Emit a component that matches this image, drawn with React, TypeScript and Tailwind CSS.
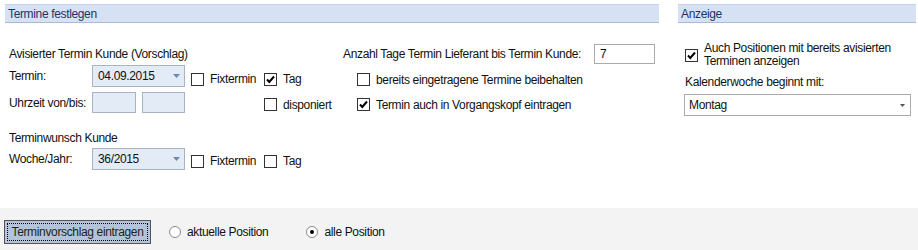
import React from "react";

const font = { fontFamily: '"Liberation Sans", Arial, sans-serif' };

function Check({ checked = false }: { checked?: boolean }) {
  return (
    <span className="w-[13px] h-[13px] shrink-0 border border-[#333333] bg-white flex items-center justify-center">
      {checked && (
        <svg width="11" height="11" viewBox="0 0 11 11">
          <path d="M2 5.5 L4.3 8 L9 2.5" stroke="#000" strokeWidth="2" fill="none" />
        </svg>
      )}
    </span>
  );
}

function Radio({ checked = false }: { checked?: boolean }) {
  return (
    <span className="w-[12px] h-[12px] shrink-0 rounded-full border border-[#8a8a8a] bg-white flex items-center justify-center">
      {checked && <span className="w-[4px] h-[4px] rounded-full bg-black" />}
    </span>
  );
}

function Combo({ value, w }: { value: string; w: string }) {
  return (
    <div className={`${w} h-[22px] border border-[#a9b4c3] bg-[#e3ebf7] flex items-center justify-between pl-[5px] pr-[4px]`}>
      <span>{value}</span>
      <svg width="7" height="4" viewBox="0 0 7 4">
        <path d="M0 0 H7 L3.5 4 Z" fill="#6a8ab5" />
      </svg>
    </div>
  );
}

function Header({ title }: { title: string }) {
  return (
    <div className="h-[19px] bg-[#d6e1f3] border-t border-b border-t-[#c4d2e6] border-b-[#a9bcd6] flex items-center pl-[3px] text-[#1e3466]">
      {title}
    </div>
  );
}

export default function App() {
  return (
    <div
      className="w-[918px] h-[250px] bg-white text-[12px] tracking-[-0.35px] text-[#111] flex flex-col overflow-hidden"
      style={font}
    >
      <div className="h-[208px] flex pt-[4px]">
        {/* left panel */}
        <div className="ml-[5px] w-[654px] flex flex-col">
          <Header title="Termine festlegen" />
          <div className="flex">
            {/* column A */}
            <div className="w-[338px] pl-[4px] flex flex-col">
              <div className="mt-[24px] h-[14px] leading-[14px]">Avisierter Termin Kunde (Vorschlag)</div>
              <div className="mt-[4px] h-[22px] flex items-center">
                <span className="w-[83px]">Termin:</span>
                <Combo value="04.09.2015" w="w-[93px]" />
                <div className="ml-[6px] mt-[6px] flex items-center">
                  <Check />
                  <span className="ml-[6px] w-[54px]">Fixtermin</span>
                  <Check checked />
                  <span className="ml-[6px]">Tag</span>
                </div>
              </div>
              <div className="mt-[5px] h-[21px] flex items-center">
                <span className="w-[83px]">Uhrzeit von/bis:</span>
                <div className="w-[44px] h-[21px] border border-[#a9b4c3] bg-[#e3ebf7]" />
                <div className="ml-[6px] w-[43px] h-[21px] border border-[#a9b4c3] bg-[#e3ebf7]" />
                <div className="ml-[79px] mt-[4px] flex items-center">
                  <Check />
                  <span className="ml-[6px]">disponiert</span>
                </div>
              </div>
              <div className="mt-[19px] h-[12px] leading-[12px]">Terminwunsch Kunde</div>
              <div className="mt-[4px] h-[22px] flex items-center">
                <span className="w-[83px]">Woche/Jahr:</span>
                <Combo value="36/2015" w="w-[93px]" />
                <div className="ml-[6px] mt-[4px] flex items-center">
                  <Check />
                  <span className="ml-[6px] w-[54px]">Fixtermin</span>
                  <Check />
                  <span className="ml-[6px]">Tag</span>
                </div>
              </div>
            </div>
            {/* column B */}
            <div className="flex-1 flex flex-col">
              <div className="mt-[21px] h-[20px] flex items-center">
                <span className="w-[251px]">Anzahl Tage Termin Lieferant bis Termin Kunde:</span>
                <div className="w-[61px] h-[20px] border border-[#ababab] bg-white flex items-center pl-[5px]">7</div>
              </div>
              <div className="mt-[9px] ml-[14px] h-[13px] flex items-center">
                <Check />
                <span className="ml-[6px]">bereits eingetragene Termine beibehalten</span>
              </div>
              <div className="mt-[12px] ml-[14px] h-[13px] flex items-center">
                <Check checked />
                <span className="ml-[6px]">Termin auch in Vorgangskopf eintragen</span>
              </div>
            </div>
          </div>
        </div>
        {/* right panel */}
        <div className="ml-[19px] w-[238px] flex flex-col">
          <Header title="Anzeige" />
          <div className="mt-[19px] ml-[7px] flex items-center">
            <Check checked />
            <span className="ml-[6px] leading-[13px]">
              Auch Positionen mit bereits avisierten
              <br />
              Terminen anzeigen
            </span>
          </div>
          <div className="mt-[7px] ml-[7px] h-[14px] leading-[14px]">Kalenderwoche beginnt mit:</div>
          <div className="mt-[5px] ml-[6px] w-[227px] h-[22px] border border-[#ababab] bg-white flex items-center justify-between pl-[4px] pr-[5px]">
            <span>Montag</span>
            <svg width="5" height="3" viewBox="0 0 5 3">
              <path d="M0 0 H5 L2.5 3 Z" fill="#555" />
            </svg>
          </div>
        </div>
      </div>
      {/* bottom bar */}
      <div className="flex-1 bg-[#f3f3f3] flex items-center pt-[6px]">
        <div className="ml-[4px] w-[147px] h-[24px] border border-[#555555] bg-[#b3c3da] p-[2px]">
          <div className="w-full h-full border border-dotted border-black flex items-center justify-center text-[#222]">
            Terminvorschlag eintragen
          </div>
        </div>
        <div className="ml-[18px] flex items-center">
          <Radio />
          <span className="ml-[6px]">aktuelle Position</span>
        </div>
        <div className="ml-[38px] flex items-center">
          <Radio checked />
          <span className="ml-[6px]">alle Position</span>
        </div>
      </div>
    </div>
  );
}
